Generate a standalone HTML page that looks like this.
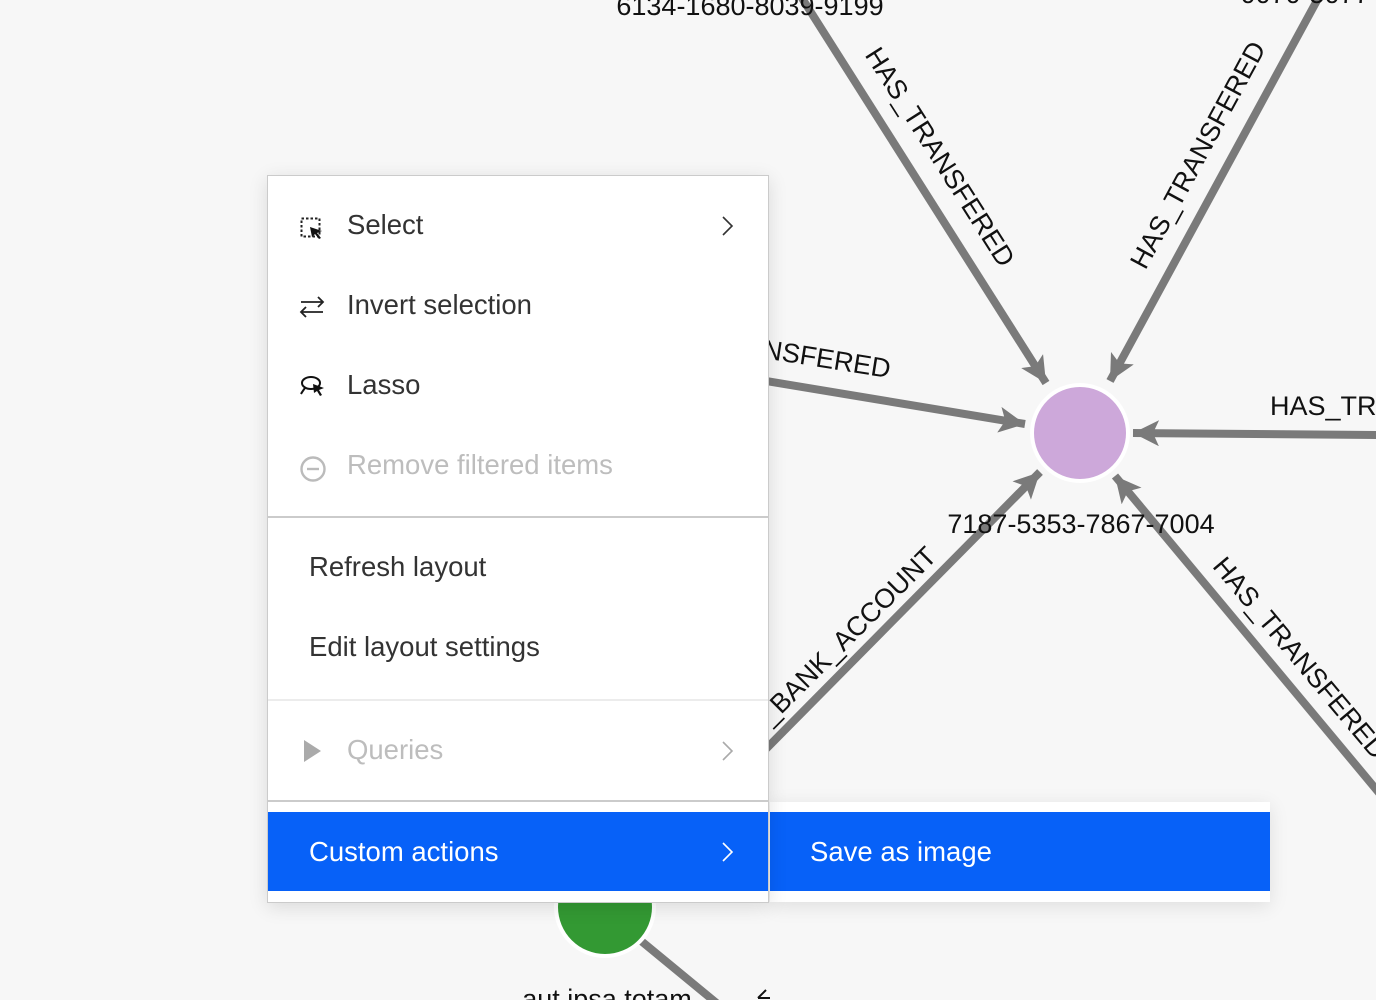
<!DOCTYPE html>
<html><head><meta charset="utf-8">
<style>
html,body{margin:0;padding:0;width:1376px;height:1000px;overflow:hidden;background:#f7f7f7;font-family:"Liberation Sans",Roboto,sans-serif;}
svg.g{position:absolute;left:0;top:0}
.menu{position:absolute;left:267px;top:175px;width:500px;height:726px;background:#fff;border:1px solid #cbcbcb;box-shadow:0 4px 18px rgba(0,0,0,0.12);}
.it{position:absolute;left:0;width:500px;height:80px;font-size:27.5px;color:#333;line-height:80px;}
.it .ic{position:absolute;left:30px;top:0;width:30px;height:80px;}
.it .t{position:absolute;left:79px;top:-1px}
.it .t2{position:absolute;left:41px;top:-1px}
.dis{color:#bdbdbd}
.chev{position:absolute;left:452px;top:29px;width:14px;height:22px}
.hr{position:absolute;left:0;width:500px;height:2px;background:#cbcbcb}
.blue{position:absolute;background:#0761f8;color:#fff;font-size:27.5px;line-height:79px;height:79px}
</style></head><body>
<svg class="g" width="1376" height="1000" viewBox="0 0 1376 1000">
<defs>
<marker id="a" markerUnits="userSpaceOnUse" markerWidth="28" markerHeight="26" refX="26" refY="13" orient="auto"><path d="M0,0 L26,13 L0,26 L6,13 Z" fill="#7a7a7a"/></marker>
</defs>
<g stroke="#7a7a7a" stroke-width="8" fill="none">
<line x1="800" y1="-5" x2="1046" y2="383" marker-end="url(#a)"/>
<line x1="1320" y1="-5" x2="1110" y2="381" marker-end="url(#a)"/>
<line x1="760" y1="380" x2="1025" y2="424" marker-end="url(#a)"/>
<line x1="1380" y1="435" x2="1133" y2="433" marker-end="url(#a)"/>
<line x1="760" y1="755" x2="1040" y2="472" marker-end="url(#a)"/>
<line x1="1385" y1="800" x2="1115" y2="476" marker-end="url(#a)"/>
<line x1="640" y1="940" x2="725" y2="1010"/>
</g>
<circle cx="1080" cy="433" r="50" fill="#fff"/>
<circle cx="1080" cy="433" r="46" fill="#cda8da"/>
<circle cx="605" cy="907" r="51" fill="#fff"/>
<circle cx="605" cy="907" r="47" fill="#339933"/>
<g font-family="Liberation Sans,sans-serif" font-size="27" fill="#111">
<text x="750" y="15" text-anchor="middle">6134-1680-8039-9199</text>
<text x="1305" y="3" text-anchor="middle">0070-5077</text>
<text x="1081" y="533" text-anchor="middle">7187-5353-7867-7004</text>
<text x="1270" y="415">HAS_TRANSFERED</text>
<text x="607" y="1008" text-anchor="middle">aut ipsa totam</text>
<text transform="translate(940,157) rotate(57.5)" text-anchor="middle" dy="9">HAS_TRANSFERED</text>
<text transform="translate(1198,155) rotate(-61.5)" text-anchor="middle" dy="9">HAS_TRANSFERED</text>
<text transform="translate(889,378) rotate(9)" text-anchor="end">HAS_TRANSFERED</text>
<text transform="translate(938,558) rotate(-45)" text-anchor="end">HAS_BANK_ACCOUNT</text>
<text transform="translate(1300,658) rotate(50)" text-anchor="middle" dy="9">HAS_TRANSFERED</text>
</g>
<path d="M758,998 L766,990 M758,998 L770,998" stroke="#111" stroke-width="2"/>
</svg>

<div style="position:absolute;left:770px;top:802px;width:500px;height:100px;background:#fff;box-shadow:0 4px 18px rgba(0,0,0,0.1)"></div>
<div class="blue" style="left:770px;top:812px;width:500px;"><span style="position:absolute;left:40px">Save as image</span></div>

<div class="menu">
 <div class="it" style="top:10px">
  <svg class="ic" viewBox="0 0 30 80"><rect x="3.5" y="32.5" width="18" height="18" fill="none" stroke="#222" stroke-width="2" stroke-dasharray="2.5 2"/><path d="M12,41 L24,45 L19,47 L23,52 L21,53 L17,48 L14,51 Z" fill="#111"/></svg>
  <span class="t">Select</span>
  <svg class="chev" viewBox="0 0 14 22"><path d="M3,2 L12,11 L3,20" fill="none" stroke="#333" stroke-width="1.6"/></svg>
 </div>
 <div class="it" style="top:90px">
  <svg class="ic" viewBox="0 0 30 80"><path d="M3,36 H25 M20,31 L25,36 L20,41 M25,46 H3 M8,41 L3,46 L8,51" fill="none" stroke="#222" stroke-width="1.8"/></svg>
  <span class="t">Invert selection</span>
 </div>
 <div class="it" style="top:170px">
  <svg class="ic" viewBox="0 0 30 80"><ellipse cx="13" cy="37" rx="9" ry="6" fill="none" stroke="#111" stroke-width="2"/><path d="M7,42 Q4,46 3,48" fill="none" stroke="#111" stroke-width="2"/><path d="M15,38 L26,42 L21,44 L24,49 L22,50 L19,45 L16,47 Z" fill="#111"/></svg>
  <span class="t">Lasso</span>
 </div>
 <div class="it dis" style="top:250px">
  <svg class="ic" viewBox="0 0 30 80"><circle cx="15" cy="43" r="11.5" fill="none" stroke="#bbb" stroke-width="2.4"/><path d="M9,43 H21" stroke="#bbb" stroke-width="2.4"/></svg>
  <span class="t">Remove filtered items</span>
 </div>
 <div class="hr" style="top:340px"></div>
 <div class="it" style="top:352px"><span class="t2">Refresh layout</span></div>
 <div class="it" style="top:432px"><span class="t2">Edit layout settings</span></div>
 <div class="hr" style="top:523px;background:#ececec"></div>
 <div class="it dis" style="top:535px">
  <svg class="ic" viewBox="0 0 30 80"><path d="M6,29 L23,40 L6,51 Z" fill="#aaa"/></svg>
  <span class="t">Queries</span>
  <svg class="chev" viewBox="0 0 14 22"><path d="M3,2 L12,11 L3,20" fill="none" stroke="#aaa" stroke-width="1.6"/></svg>
 </div>
 <div class="hr" style="top:624px"></div>
 <div class="blue" style="left:0;top:636px;width:500px;">
  <span style="position:absolute;left:41px">Custom actions</span>
  <svg class="chev" viewBox="0 0 14 22" style="top:29px"><path d="M3,2 L12,11 L3,20" fill="none" stroke="#fff" stroke-width="1.6"/></svg>
 </div>
</div>
</body></html>
